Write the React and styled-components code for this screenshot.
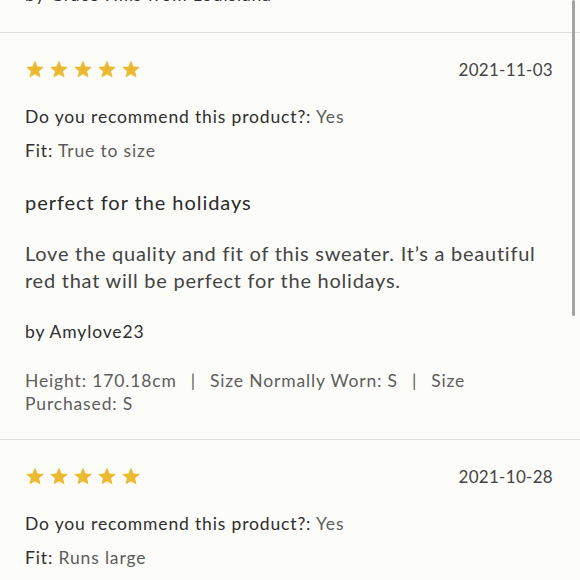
import React from "react";
import styled, { createGlobalStyle } from "styled-components";

const GlobalStyle = createGlobalStyle`
  html, body {
    margin: 0;
    padding: 0;
    background: #fcfcf8;
  }
  body {
    font-family: "Lato", "Open Sans", sans-serif;
    color: #333;
    -webkit-font-smoothing: antialiased;
  }
`;

const Screen = styled.div`
  position: relative;
  width: 580px;
  height: 580px;
  overflow: hidden;
  background: #fcfcf8;
`;

const ScrollThumb = styled.div`
  position: absolute;
  top: 0;
  right: 5px;
  width: 3px;
  height: 316px;
  border-radius: 2px;
  background: #a3a3a3;
`;

const List = styled.div`
  display: flex;
  flex-direction: column;
  margin-top: -17px;
`;

const PrevTail = styled.div`
  padding: 0 25px 25px;
  font-size: 17.5px;
  line-height: 24px;
  letter-spacing: 0.85px;
  color: #333;
`;

const Review = styled.section`
  display: flex;
  flex-direction: column;
  padding: 24px 27px 24px 25px;
  border-top: 1px solid #dcdcd8;
`;

const Block = styled.div`
  display: flex;
  flex-direction: column;
  gap: ${(p) => p.$gap || 0}px;
  margin-top: ${(p) => p.$top || 0}px;
`;

const HeaderRow = styled.div`
  display: flex;
  align-items: center;
  justify-content: space-between;
  height: 24px;
`;

const Stars = styled.div`
  display: flex;
  gap: 4px;
`;

const DateText = styled.span`
  font-size: 17px;
  letter-spacing: 0.3px;
  color: #444;
`;

const Line = styled.div`
  font-size: 17.5px;
  line-height: 24px;
  letter-spacing: 0.85px;
  color: #2e2e2e;
`;

const Author = styled(Line)`
  margin-top: 2px;
`;

const Value = styled.span`
  color: #5c5c5c;
`;

const Title = styled.h3`
  margin: 0;
  font-size: 20px;
  line-height: 28px;
  font-weight: 400;
  letter-spacing: 0.95px;
  color: #2a2a2a;
`;

const Body = styled.p`
  margin: 0;
  font-size: 20px;
  line-height: 27px;
  letter-spacing: 0.75px;
  color: #444;
`;

const Details = styled.div`
  margin-top: 1px;
  font-size: 17.5px;
  line-height: 23px;
  letter-spacing: 0.85px;
  color: #5c5c5c;
`;

const Sep = styled.span`
  margin: 0 14px;
  color: #5c5c5c;
`;

const Star = () => (
  <svg width="20" height="20" viewBox="0 0 24 24">
    <path
      d="M12 1.8l3.05 7.1 7.7.7-5.85 5.1 1.75 7.55L12 18.3l-6.65 3.95L7.1 14.7 1.25 9.6l7.7-.7z"
      fill="#ebb932"
    />
  </svg>
);

const reviews = [
  {
    date: "2021-11-03",
    recommend: "Yes",
    fit: "True to size",
    title: "perfect for the holidays",
    body: "Love the quality and fit of this sweater. It’s a beautiful red that will be perfect for the holidays.",
    author: "Amylove23",
    details: ["Height: 170.18cm", "Size Normally Worn: S", "Size Purchased: S"],
  },
  {
    date: "2021-10-28",
    recommend: "Yes",
    fit: "Runs large",
    title: "cozy and warm",
    body: "Great sweater, a little roomy but very soft.",
    author: "Kate",
    details: ["Height: 165cm", "Size Normally Worn: M", "Size Purchased: M"],
  },
];

const ReviewCard = ({ r }) => (
  <Review>
    <HeaderRow>
      <Stars>
        {[0, 1, 2, 3, 4].map((i) => (
          <Star key={i} />
        ))}
      </Stars>
      <DateText>{r.date}</DateText>
    </HeaderRow>
    <Block $top={24} $gap={10}>
      <Line>
        Do you recommend this product?: <Value>{r.recommend}</Value>
      </Line>
      <Line>
        Fit: <Value>{r.fit}</Value>
      </Line>
    </Block>
    <Block $top={25} $gap={24}>
      <Title>{r.title}</Title>
      <Body>{r.body}</Body>
      <Author>by {r.author}</Author>
      <Details>
        {r.details.map((d, i) => (
          <React.Fragment key={d}>
            {i > 0 && <Sep>|</Sep>}
            {d}
          </React.Fragment>
        ))}
      </Details>
    </Block>
  </Review>
);

export default function App() {
  return (
    <>
      <GlobalStyle />
      <Screen>
        <List>
          <PrevTail>by Grace Hills from Louisiana</PrevTail>
          {reviews.map((r) => (
            <ReviewCard key={r.date} r={r} />
          ))}
        </List>
        <ScrollThumb />
      </Screen>
    </>
  );
}
